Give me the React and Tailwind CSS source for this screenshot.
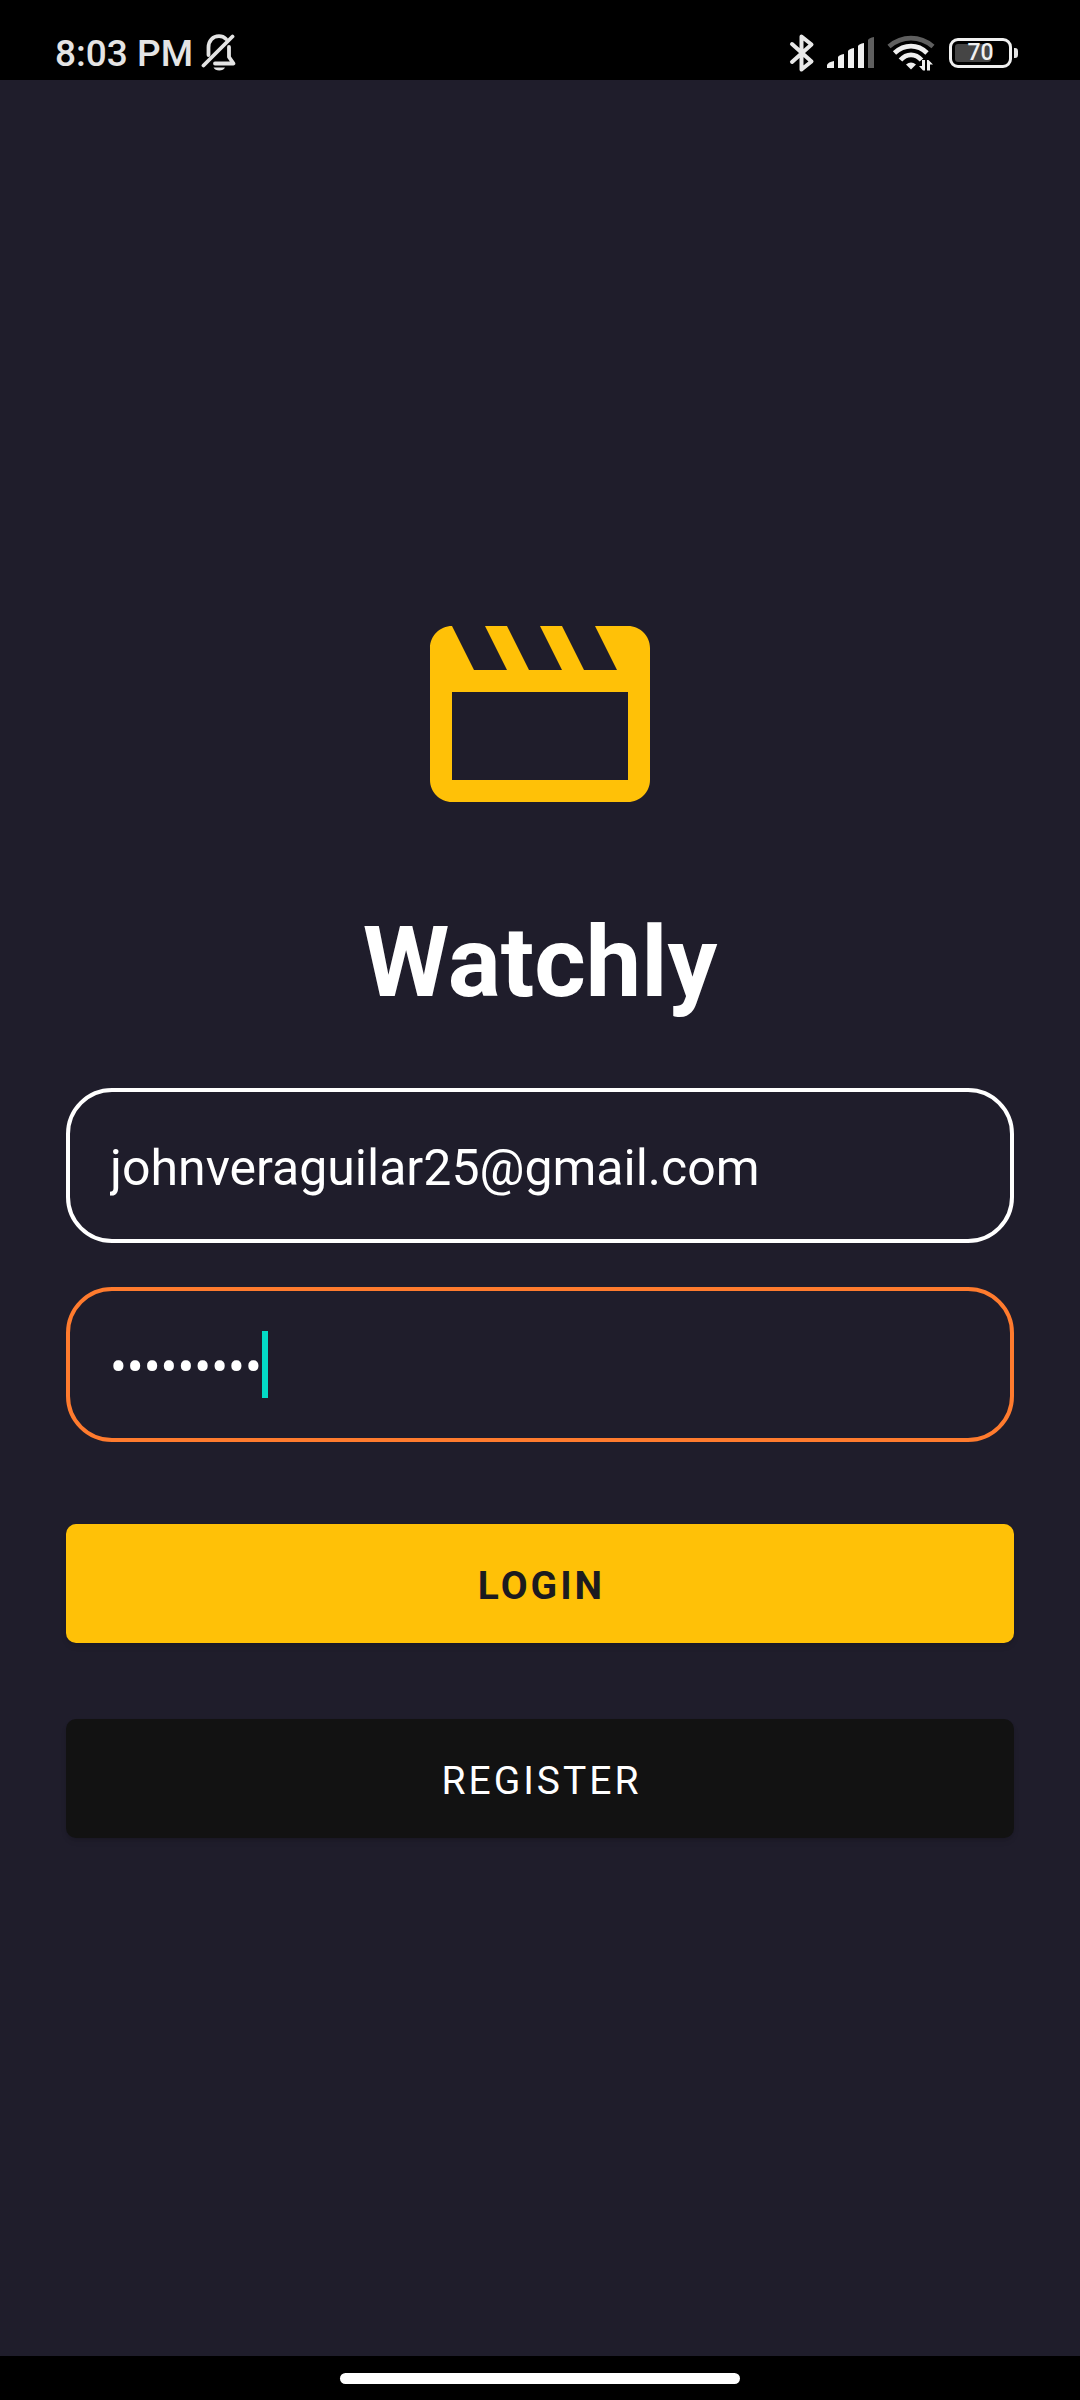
import { useState } from "react";

function BellOffIcon() {
  return (
    <svg viewBox="0 0 36 40" className="h-10 w-9" fill="none" stroke="#e4e4e4" strokeWidth="3.8" strokeLinecap="round" strokeLinejoin="round" aria-hidden="true">
      <path d="M7.500 22V14.500C7.500 7.500 12 3.200 18 3.200c3 0 5 .8 7 2.800" />
      <path d="M28 14V24l4.500 6.500H14" />
      <path d="M2.500 32.500 31.500 3.500" />
      <path d="M12.500 34.500h11.500c-1.500 4-10 4-11.500 0Z" fill="#e4e4e4" stroke="none" />
    </svg>
  );
}

function BluetoothIcon() {
  return (
    <svg viewBox="0 0 26 40" className="h-10 w-[26px]" fill="none" stroke="#e8e8e8" strokeWidth="4" strokeLinecap="round" strokeLinejoin="round" aria-hidden="true">
      <path d="M3 11 22.500 28.500 12.500 36.500V3.500L22.500 11.500 3 29" />
    </svg>
  );
}

function SignalIcon() {
  return (
    <svg viewBox="0 0 48 32" className="h-8 w-12" fill="#f0f0f0" aria-hidden="true">
      <path d="M0 31v-3q1-3 7-4v7Z" />
      <path d="M11 31V20q1-2 6-3v14Z" />
      <path d="M21 31V14q1-2 6-3v20Z" />
      <path d="M31 31V9q1-2 6-3v25Z" />
      <path d="M41 31V3q1-2 6-3v31Z" fill="#5f5f5f" />
    </svg>
  );
}

function WifiIcon() {
  return (
    <svg viewBox="0 0 48 36" className="mr-0.5 h-9 w-12" fill="none" strokeWidth="4.8" aria-hidden="true">
      <path d="M2 11.500Q12 3.200 24 3.200T46 11.500" stroke="#5f5f5f" />
      <path d="M7.500 18Q15 11.200 24 11.200T40 18" stroke="#f0f0f0" />
      <path d="M13.500 25Q18 19.800 24 19.800T34.500 25" stroke="#f0f0f0" />
      <path d="M19 29.500Q24 25.500 29 29.500L24 34.500Z" fill="#f0f0f0" />
      <path d="M38 25v10.500h-2l-4-4.500h3V25ZM40 35.500V25h1.500l4.500 4.500h-3v6Z" fill="#f0f0f0" />
    </svg>
  );
}

function Battery() {
  return (
    <div className="flex items-center gap-[2px]">
      <div className="flex h-[30px] w-[63px] rounded-[9px] border-3 border-[#f0f0f0] p-[3px]">
        <div className="relative flex flex-1 items-center justify-center">
          <span className="absolute inset-y-0 left-0 w-[70%] rounded-[3px] bg-[#454545]" />
          <span className="relative text-[23px] leading-6 font-medium text-[#f0f0f0]">70</span>
        </div>
      </div>
      <span className="h-[10px] w-1 rounded-r-[3px] bg-[#e4e4e4]" />
    </div>
  );
}

function MovieIcon() {
  return (
    <svg viewBox="0 0 24 24" className="size-[264px]" fill="#ffc107" aria-hidden="true">
      <path d="M4 4l2 4h3L7 4h2l2 4h3l-2-4h2l2 4h3l-2-4h3c1.100 0 2 .9 2 2v12c0 1.100-.9 2-2 2H4c-1.100 0-2-.9-2-2V6c0-1.100.9-2 2-2zm0 6v8h16v-8H4z" fillRule="evenodd" />
    </svg>
  );
}

export default function App() {
  const [email, setEmail] = useState("johnveraguilar25@gmail.com");
  const [password, setPassword] = useState("watchly25");

  return (
    <div className="flex min-h-screen flex-col bg-[#1f1d2b] font-[Roboto,sans-serif] text-white">
      <header className="flex h-20 items-center justify-between bg-black pt-[26px] pr-[62px] pl-[55px]">
        <div className="flex items-center gap-2">
          <span className="pt-0.5 text-[37px] leading-10 font-medium text-[#e4e4e4]">8:03 PM</span>
          <BellOffIcon />
        </div>
        <div className="flex items-center gap-3">
          <BluetoothIcon />
          <SignalIcon />
          <WifiIcon />
          <Battery />
        </div>
      </header>

      <main className="flex flex-1 flex-col items-center justify-center px-[66px] pb-4">
        <MovieIcon />
        <h1 className="mt-[58px] text-[99px] leading-[116px] font-bold">Watchly</h1>
        <form className="mt-[68px] flex w-full flex-col" onSubmit={(e) => e.preventDefault()}>
          <label className="flex h-[155px] items-center rounded-[46px] border-4 border-white px-10 pt-1">
            <input
              type="email"
              aria-label="Email"
              className="w-full bg-transparent text-[50px] leading-[60px] outline-none"
              value={email}
              onChange={(e) => setEmail(e.target.value)}
            />
          </label>
          <label className="mt-11 flex h-[155px] items-center rounded-[46px] border-4 border-[#ff7b2e] px-10">
            <input
              type="password"
              aria-label="Password"
              className="field-sizing-content bg-transparent pt-1 text-[50px] leading-[60px] outline-none"
              value={password}
              onChange={(e) => setPassword(e.target.value)}
            />
            <span className="h-[67px] w-[6px] bg-[#03dac5]" />
          </label>
          <button type="submit" className="mt-[82px] h-[119px] rounded-[10px] bg-[#ffc107] pt-1 pl-[3px] text-[39px] leading-[46px] font-bold tracking-[3px] text-[#1c1b1f] shadow-md">
            LOGIN
          </button>
          <button type="button" className="mt-[76px] h-[119px] rounded-[10px] bg-[#121212] pt-1 pl-[3px] text-[39px] leading-[46px] tracking-[3px] shadow-md">
            REGISTER
          </button>
        </form>
      </main>

      <footer className="flex h-11 items-center justify-center bg-black">
        <div className="h-[11px] w-[37%] rounded-full bg-white" />
      </footer>
    </div>
  );
}
